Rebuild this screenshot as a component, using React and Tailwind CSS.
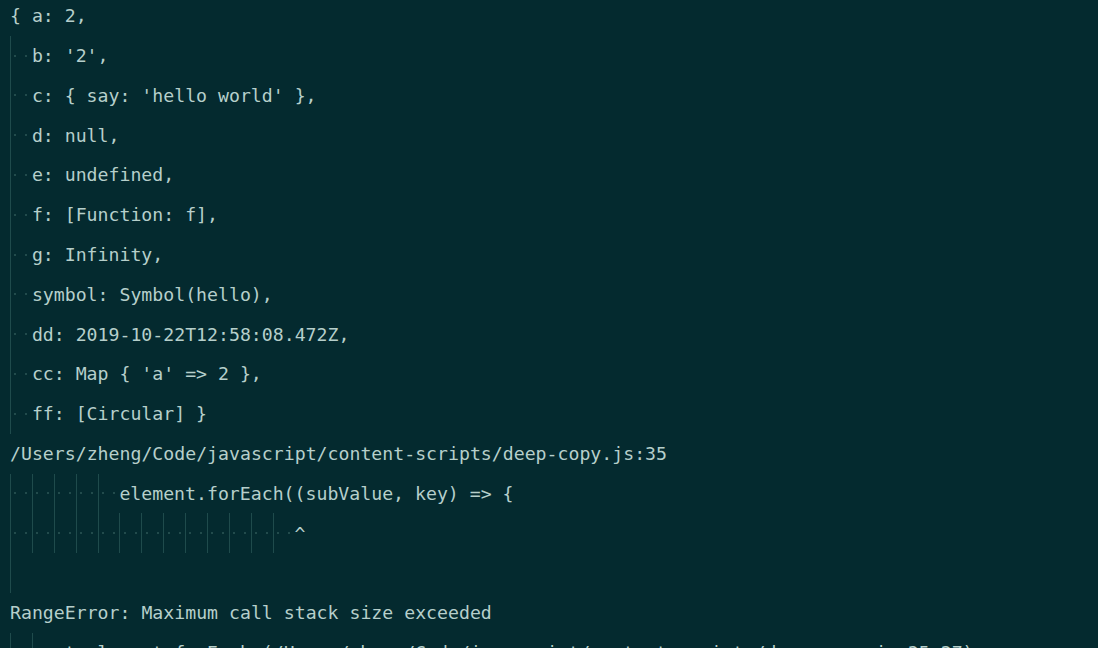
import React from "react";

const lines = [
  { indent: 0, text: "{ a: 2," },
  { indent: 2, text: "b: '2'," },
  { indent: 2, text: "c: { say: 'hello world' }," },
  { indent: 2, text: "d: null," },
  { indent: 2, text: "e: undefined," },
  { indent: 2, text: "f: [Function: f]," },
  { indent: 2, text: "g: Infinity," },
  { indent: 2, text: "symbol: Symbol(hello)," },
  { indent: 2, text: "dd: 2019-10-22T12:58:08.472Z," },
  { indent: 2, text: "cc: Map { 'a' => 2 }," },
  { indent: 2, text: "ff: [Circular] }" },
  { indent: 0, text: "/Users/zheng/Code/javascript/content-scripts/deep-copy.js:35" },
  { indent: 10, text: "element.forEach((subValue, key) => {" },
  { indent: 26, text: "^" },
  { indent: 1, text: "", blank: true },
  { indent: 0, text: "RangeError: Maximum call stack size exceeded" },
  {
    indent: 4,
    text: "at element.forEach (/Users/zheng/Code/javascript/content-scripts/deep-copy.js:35:27)",
  },
];

function Space({ col, blank }) {
  return (
    <span className="relative inline-block w-[1ch] h-full shrink-0">
      {col % 2 === 0 && (
        <span className="absolute left-0 top-0 bottom-0 w-px bg-[#1f4b4c]" />
      )}
      {!blank && (
        <span className="absolute left-1/2 top-1/2 w-[2px] h-[2px] -translate-x-1/2 -translate-y-1/2 rounded-full bg-[#2c5757]" />
      )}
    </span>
  );
}

function Line({ indent, text, blank }) {
  return (
    <div className="flex items-center h-[39.8px] whitespace-pre">
      {Array.from({ length: indent }).map((_, i) => (
        <Space key={i} col={i} blank={blank} />
      ))}
      <span>{text}</span>
    </div>
  );
}

export default function App() {
  return (
    <div className="h-[648px] w-full overflow-hidden bg-[#042a2f] text-[#b6cfcb] font-['DejaVu_Sans_Mono',monospace] text-[18.2px]">
      <div className="pl-[10px] -mt-1">
        {lines.map((l, i) => (
          <Line key={i} {...l} />
        ))}
      </div>
    </div>
  );
}
